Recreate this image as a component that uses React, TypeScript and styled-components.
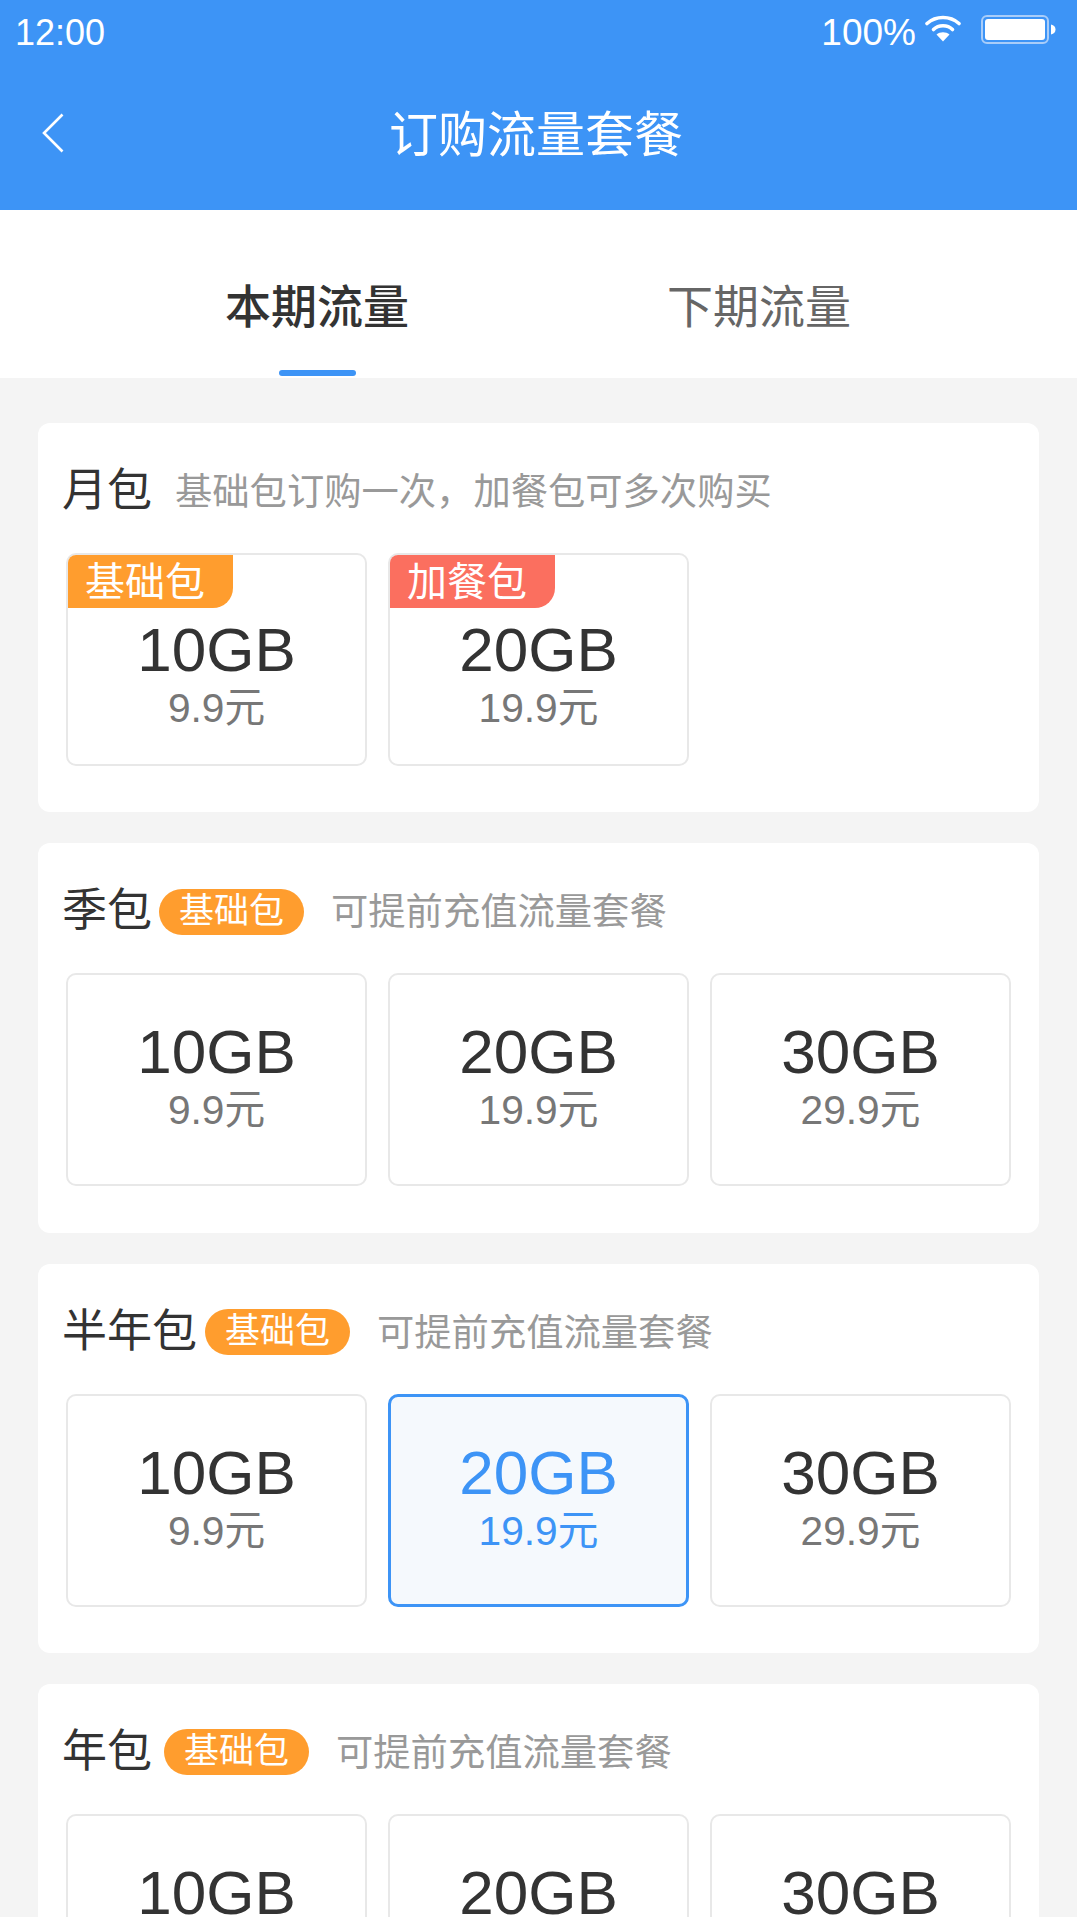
import React from 'react';
import styled, { createGlobalStyle } from 'styled-components';

const GlobalStyle = createGlobalStyle`
  html, body {
    margin: 0;
    padding: 0;
    background: #f4f4f4;
  }
  body {
    font-family: 'Liberation Sans', 'Noto Sans CJK SC', sans-serif;
    color: #333;
  }
  * {
    box-sizing: border-box;
  }
`;

type Corner = 'base' | 'extra';

interface PlanOption {
  size: string;
  price: string;
  corner?: Corner;
  selected?: boolean;
}

interface PlanGroup {
  title: string;
  pillGap?: number;
  hint: string;
  options: PlanOption[];
}

const threeOptions: PlanOption[] = [
  { size: '10GB', price: '9.9元' },
  { size: '20GB', price: '19.9元' },
  { size: '30GB', price: '29.9元' },
];

const groups: PlanGroup[] = [
  {
    title: '月包',
    hint: '基础包订购一次，加餐包可多次购买',
    options: [
      { size: '10GB', price: '9.9元', corner: 'base' },
      { size: '20GB', price: '19.9元', corner: 'extra' },
    ],
  },
  { title: '季包', pillGap: 7, hint: '可提前充值流量套餐', options: threeOptions },
  {
    title: '半年包',
    pillGap: 8,
    hint: '可提前充值流量套餐',
    options: [
      threeOptions[0],
      { ...threeOptions[1], selected: true },
      threeOptions[2],
    ],
  },
  { title: '年包', pillGap: 12, hint: '可提前充值流量套餐', options: threeOptions },
];

const App: React.FC = () => {
  return (
    <Page>
      <GlobalStyle />
      <Header>
        <StatusBar>
          <StatusText>12:00</StatusText>
          <StatusRight>
            <BatteryText>100%</BatteryText>
            <svg width='36' height='28' viewBox='0 0 36 28'>
              <path
                d='M2 9.5C11 1.5 25 1.5 34 9.5'
                fill='none'
                stroke='#fff'
                strokeWidth='3.6'
                strokeLinecap='round'
              />
              <path
                d='M8.5 15.5C13.5 10.5 22.5 10.5 27.5 15.5'
                fill='none'
                stroke='#fff'
                strokeWidth='3.6'
                strokeLinecap='round'
              />
              <path d='M18 27.5L11.5 20.5C15 17.6 21 17.6 24.5 20.5Z' fill='#fff' />
            </svg>
            <svg width='75' height='30' viewBox='0 0 75 30'>
              <rect
                x='1'
                y='1'
                width='66'
                height='27'
                rx='5'
                fill='none'
                stroke='#a9cdf9'
                strokeWidth='2'
              />
              <rect x='4' y='4' width='60' height='21' rx='3' fill='#fff' />
              <path d='M70 9.5C73 10 74.5 12 74.5 14.5C74.5 17 73 19 70 19.5Z' fill='#fff' />
            </svg>
          </StatusRight>
        </StatusBar>
        <NavBar>
          <BackButton>
            <svg width='24' height='40' viewBox='0 0 24 40'>
              <path
                d='M21.5 1.5L3 20L21.5 38.5'
                fill='none'
                stroke='#fff'
                strokeWidth='2.6'
              />
            </svg>
          </BackButton>
          <NavTitle>订购流量套餐</NavTitle>
        </NavBar>
      </Header>

      <Tabs>
        <Tab $active>本期流量</Tab>
        <Tab>下期流量</Tab>
      </Tabs>

      <Content>
        {groups.map((group) => (
          <Card key={group.title}>
            <CardHead>
              <CardTitle>{group.title}</CardTitle>
              {group.pillGap !== undefined && <Pill $gap={group.pillGap}>基础包</Pill>}
              <Hint $afterPill={group.pillGap !== undefined}>{group.hint}</Hint>
            </CardHead>
            <OptionGrid>
              {group.options.map((option) => (
                <Option
                  key={option.size}
                  $selected={option.selected}
                  $tagged={Boolean(option.corner)}
                >
                  {option.corner && (
                    <CornerTag $kind={option.corner}>
                      {option.corner === 'base' ? '基础包' : '加餐包'}
                    </CornerTag>
                  )}
                  <Size>{option.size}</Size>
                  <Price $selected={option.selected}>{option.price}</Price>
                </Option>
              ))}
            </OptionGrid>
          </Card>
        ))}
      </Content>
    </Page>
  );
};

const Page = styled.div`
  width: 1077px;
  height: 1917px;
  overflow: hidden;
  background: #f4f4f4;
`;

const Header = styled.header`
  height: 210px;
  background: #3d94f6;
  color: #fff;
`;

const StatusBar = styled.div`
  display: flex;
  align-items: center;
  justify-content: space-between;
  height: 60px;
  padding: 0 21px 0 15px;
`;

const StatusText = styled.span`
  padding-top: 6px;
  font-size: 36px;
  line-height: 42px;
`;

const BatteryText = styled(StatusText)`
  font-size: 37px;
`;

const StatusRight = styled.div`
  display: flex;
  align-items: center;

  svg:first-of-type {
    margin: -4px 20px 0 9px;
  }
`;

const NavBar = styled.div`
  position: relative;
  display: flex;
  align-items: center;
  justify-content: center;
  height: 149px;
  padding-right: 5px;
`;

const BackButton = styled.button`
  position: absolute;
  top: 53px;
  left: 41px;
  display: flex;
  padding: 0;
  background: none;
  border: 0;
`;

const NavTitle = styled.h1`
  margin: 0;
  font-size: 49px;
  font-weight: 400;
  line-height: 60px;
`;

const Tabs = styled.nav`
  display: flex;
  height: 168px;
  padding-left: 96px;
  background: #fff;
`;

const Tab = styled.div<{ $active?: boolean }>`
  position: relative;
  width: 442px;
  padding-top: 68px;
  font-size: 46px;
  font-weight: ${(p) => (p.$active ? 500 : 400)};
  line-height: 58px;
  text-align: center;
  color: ${(p) => (p.$active ? '#333' : '#666')};

  &::after {
    content: '';
    display: ${(p) => (p.$active ? 'block' : 'none')};
    position: absolute;
    left: 183px;
    bottom: 2px;
    width: 77px;
    height: 6px;
    border-radius: 3px;
    background: #3d94f6;
  }
`;

const Content = styled.main`
  display: flex;
  flex-direction: column;
  gap: 31px;
  padding: 45px 38px 0;
`;

const Card = styled.section`
  flex: none;
  height: 389.3px;
  padding: 0 24px;
  background: #fff;
  border-radius: 12px;
`;

const CardHead = styled.div`
  display: flex;
  align-items: center;
  height: 130px;
  padding-top: 7px;
`;

const CardTitle = styled.h2`
  margin: -10px 0 0;
  font-size: 45px;
  font-weight: 400;
  color: #333;
`;

const Pill = styled.span<{ $gap: number }>`
  width: 145px;
  height: 46px;
  margin-left: ${(p) => p.$gap}px;
  border-radius: 23px;
  background: #ff9d2e;
  color: #fff;
  font-size: 35px;
  line-height: 44px;
  text-align: center;
`;

const Hint = styled.span<{ $afterPill?: boolean }>`
  margin-top: -5px;
  margin-left: ${(p) => (p.$afterPill ? 27 : 23)}px;
  font-size: 37.3px;
  color: #999;
`;

const OptionGrid = styled.div`
  display: grid;
  grid-template-columns: repeat(3, 301px);
  gap: 21px;
  margin-left: 4px;
`;

const Option = styled.div<{ $selected?: boolean; $tagged?: boolean }>`
  position: relative;
  height: 213px;
  padding-top: ${(p) => (p.$tagged ? 65 : p.$selected ? 46 : 47)}px;
  border: ${(p) => (p.$selected ? '3px solid #3d94f6' : '2px solid #e8e8e8')};
  border-radius: 10px;
  background: ${(p) => (p.$selected ? '#f5f9fd' : '#fff')};
  color: ${(p) => (p.$selected ? '#3d94f6' : '#333')};
  text-align: center;
`;

const CornerTag = styled.span<{ $kind: Corner }>`
  position: absolute;
  top: 0;
  left: 0;
  width: 165px;
  height: 53px;
  padding-left: 17px;
  border-radius: 8px 0 20px 0;
  background: ${(p) => (p.$kind === 'base' ? '#ff9d2e' : '#fb6f5f')};
  color: #fff;
  font-size: 40px;
  line-height: 54px;
  text-align: left;
`;

const Size = styled.div`
  font-size: 62px;
  line-height: 60px;
`;

const Price = styled.div<{ $selected?: boolean }>`
  margin-top: 5px;
  font-size: 40.7px;
  line-height: 46px;
  color: ${(p) => (p.$selected ? '#3d94f6' : '#777')};
`;

export default App;
